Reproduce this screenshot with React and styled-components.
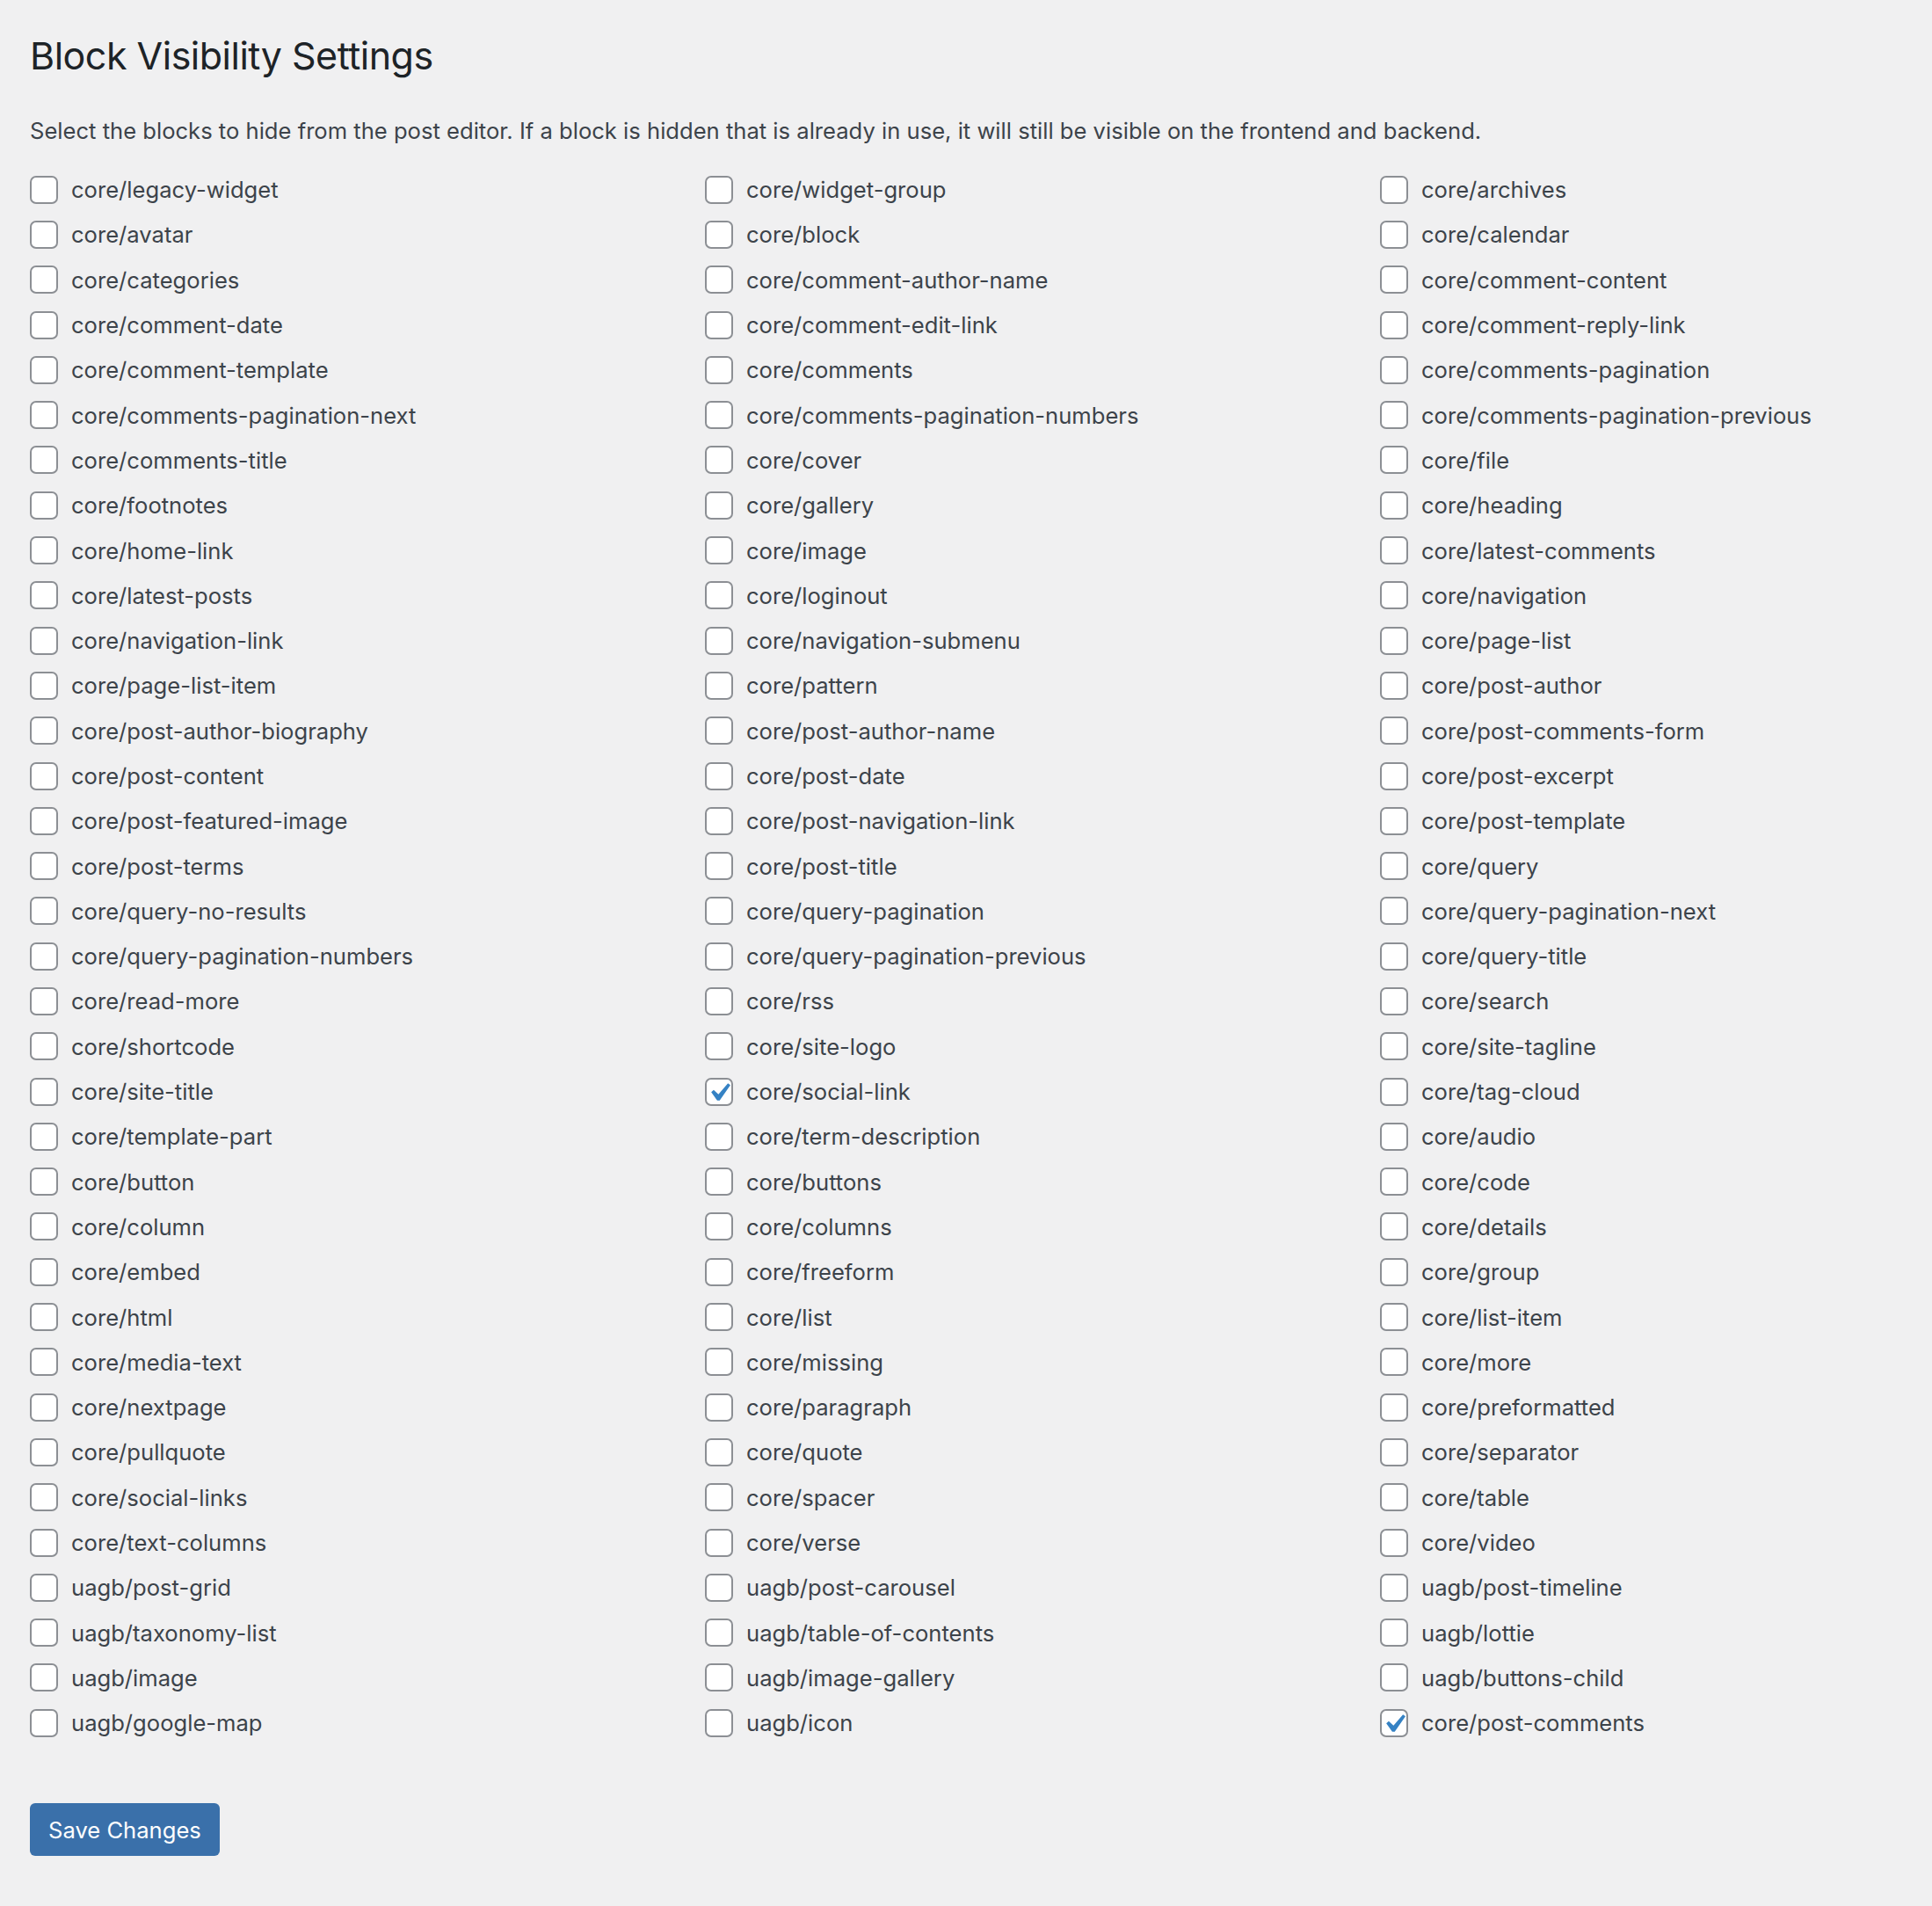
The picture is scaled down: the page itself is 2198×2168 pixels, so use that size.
import React from 'react'
import styled, { createGlobalStyle } from 'styled-components'

const GlobalStyle = createGlobalStyle`
  html, body {
    margin: 0;
    padding: 0;
    background: #f0f0f1;
  }
  body {
    font-family: Inter, "Noto Sans", "Liberation Sans", sans-serif;
    color: #3c434a;
  }
`

const Page = styled.div`
  padding: 33px 34px 56px 34px;
`

const Title = styled.h1`
  margin: 0;
  font-size: 43px;
  font-weight: 400;
  line-height: 60px;
  color: #1d2327;
  letter-spacing: -0.5px;
`

const Intro = styled.p`
  margin: 38px 0 0 0;
  font-size: 25.6px;
  line-height: 36px;
  color: #3c434a;
`

const BlockGrid = styled.div`
  display: grid;
  grid-template-columns: 768px 768px 1fr;
  grid-auto-rows: 51.3px;
  margin-top: 23px;
`

const BlockRow = styled.label`
  display: flex;
  align-items: center;
  gap: 15px;
  font-size: 25.6px;
  color: #3c434a;
  white-space: nowrap;
`

const CheckBox = styled.span`
  position: relative;
  flex: 0 0 auto;
  width: 32px;
  height: 32px;
  box-sizing: border-box;
  border: 2px solid #8c8f94;
  border-radius: 7px;
  background: #fff;
`

const CheckMark = styled.svg`
  position: absolute;
  left: -7px;
  top: -6px;
  width: 42px;
  height: 42px;
`

const SaveButton = styled.button`
  margin-top: 66px;
  height: 60px;
  padding: 0 21px;
  border: none;
  border-radius: 6px;
  background: #3a70aa;
  color: #fff;
  font-family: Inter, "Noto Sans", "Liberation Sans", sans-serif;
  font-size: 25.6px;
  cursor: pointer;
`

const blocks = [
  'core/legacy-widget', 'core/widget-group', 'core/archives',
  'core/avatar', 'core/block', 'core/calendar',
  'core/categories', 'core/comment-author-name', 'core/comment-content',
  'core/comment-date', 'core/comment-edit-link', 'core/comment-reply-link',
  'core/comment-template', 'core/comments', 'core/comments-pagination',
  'core/comments-pagination-next', 'core/comments-pagination-numbers', 'core/comments-pagination-previous',
  'core/comments-title', 'core/cover', 'core/file',
  'core/footnotes', 'core/gallery', 'core/heading',
  'core/home-link', 'core/image', 'core/latest-comments',
  'core/latest-posts', 'core/loginout', 'core/navigation',
  'core/navigation-link', 'core/navigation-submenu', 'core/page-list',
  'core/page-list-item', 'core/pattern', 'core/post-author',
  'core/post-author-biography', 'core/post-author-name', 'core/post-comments-form',
  'core/post-content', 'core/post-date', 'core/post-excerpt',
  'core/post-featured-image', 'core/post-navigation-link', 'core/post-template',
  'core/post-terms', 'core/post-title', 'core/query',
  'core/query-no-results', 'core/query-pagination', 'core/query-pagination-next',
  'core/query-pagination-numbers', 'core/query-pagination-previous', 'core/query-title',
  'core/read-more', 'core/rss', 'core/search',
  'core/shortcode', 'core/site-logo', 'core/site-tagline',
  'core/site-title', 'core/social-link', 'core/tag-cloud',
  'core/template-part', 'core/term-description', 'core/audio',
  'core/button', 'core/buttons', 'core/code',
  'core/column', 'core/columns', 'core/details',
  'core/embed', 'core/freeform', 'core/group',
  'core/html', 'core/list', 'core/list-item',
  'core/media-text', 'core/missing', 'core/more',
  'core/nextpage', 'core/paragraph', 'core/preformatted',
  'core/pullquote', 'core/quote', 'core/separator',
  'core/social-links', 'core/spacer', 'core/table',
  'core/text-columns', 'core/verse', 'core/video',
  'uagb/post-grid', 'uagb/post-carousel', 'uagb/post-timeline',
  'uagb/taxonomy-list', 'uagb/table-of-contents', 'uagb/lottie',
  'uagb/image', 'uagb/image-gallery', 'uagb/buttons-child',
  'uagb/google-map', 'uagb/icon', 'core/post-comments'
]

const hidden = ['core/social-link', 'core/post-comments']

const BlockOption = ({ name, checked }) => {
  return (
    <BlockRow>
      <CheckBox>
        {checked && (
          <CheckMark viewBox='0 0 20 20'>
            <path d='M14.83 4.89l1.34.94-5.81 8.38H9.02L5.78 9.67l1.34-1.25 2.57 2.4z' fill='#3582c4' />
          </CheckMark>
        )}
      </CheckBox>
      {name}
    </BlockRow>
  )
}

const App = () => {
  return (
    <Page>
      <GlobalStyle />
      <Title>Block Visibility Settings</Title>
      <Intro>
        Select the blocks to hide from the post editor. If a block is hidden that is already in use, it will still be visible on the frontend and backend.
      </Intro>
      <BlockGrid>
        {blocks.map(name => (
          <BlockOption key={name} name={name} checked={hidden.includes(name)} />
        ))}
      </BlockGrid>
      <SaveButton>Save Changes</SaveButton>
    </Page>
  )
}

export default App
